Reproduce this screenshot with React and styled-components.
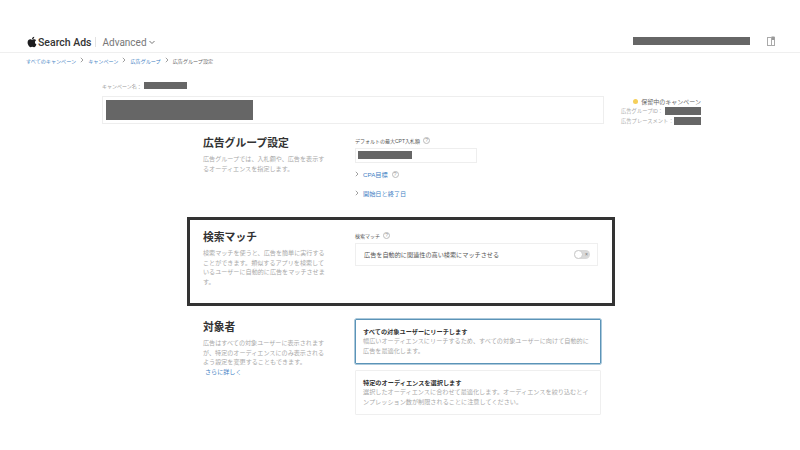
import styled, { createGlobalStyle } from "styled-components";
import { FaApple } from "react-icons/fa";

const GlobalStyle = createGlobalStyle`
  html, body {
    margin: 0;
    background: #fff;
    font-family: "Liberation Sans", "Noto Sans CJK JP", sans-serif;
    color: #333;
  }
`;

const Page = styled.div`
  width: 800px;
  height: 450px;
  overflow: hidden;
  background: #fff;
`;

const Header = styled.header`
  height: 53px;
  box-sizing: border-box;
  padding: 31px 25px 0 26px;
  border-bottom: 1px solid #efefef;
  display: flex;
  align-items: flex-start;
`;

const Brand = styled.div`
  display: flex;
  align-items: center;
  height: 20px;
  margin-top: 1px;
  color: #1d1d1f;
  font-family: Roboto, "Liberation Sans", sans-serif;
`;

const BrandName = styled.span`
  font-size: 10.5px;
  font-weight: 500;
  color: #333;
`;

const BrandDivider = styled.span`
  width: 1px;
  height: 10px;
  background: #e2e2e2;
  margin: 0 6px 0 4px;
`;

const Advanced = styled.span`
  font-size: 10px;
  color: #777;
  margin-right: 2px;
`;

const Redacted = styled.div`
  background: #666;
  width: ${(p) => p.$w}px;
  height: ${(p) => p.$h}px;
  flex: none;
`;

const HeaderRight = styled.div`
  margin-left: auto;
  display: flex;
  align-items: center;
  gap: 17px;
  height: 20px;
`;

const Crumbs = styled.nav`
  display: flex;
  align-items: center;
  gap: 4px;
  padding: 1px 0 0 26px;
  height: 12px;
  margin-bottom: 1px;
  font-size: 5.1px;
  color: #3f7fc4;
`;

const CrumbCurrent = styled.span`
  color: #666;
`;

const CampaignRow = styled.div`
  display: flex;
  padding: 14px 0 0 102px;
`;

const CampaignMain = styled.div`
  width: 502px;
`;

const CampaignLabel = styled.div`
  display: flex;
  align-items: center;
  gap: 2px;
  height: 8px;
  font-size: 5px;
  color: #999;
  margin-bottom: 7px;
`;

const CampaignBox = styled.div`
  box-sizing: border-box;
  height: 28px;
  border: 1px solid #eee;
  padding: 3px;
`;

const StatusPanel = styled.aside`
  margin: 16px 0 0 17px;
  width: 80px;
  display: flex;
  flex-direction: column;
  font-size: 5.3px;
  color: #aaa;
`;

const StatusTitle = styled.div`
  display: flex;
  align-items: center;
  justify-content: flex-end;
  gap: 3px;
  height: 9px;
  font-size: 6px;
  color: #666;
`;

const StatusDot = styled.span`
  width: 5px;
  height: 5px;
  border-radius: 50%;
  background: #f5cf5a;
`;

const StatusLine = styled.div`
  display: flex;
  align-items: center;
  justify-content: space-between;
  height: 10px;
  white-space: nowrap;
`;

const Sections = styled.main`
  width: 428px;
  margin-left: 187px;
  margin-top: 7px;
`;

const Section = styled.section`
  box-sizing: border-box;
  height: ${(p) => p.$h}px;
  padding: ${(p) => p.$pt}px 14px 0 16px;
  display: grid;
  grid-template-columns: 152px 1fr;
  align-items: start;
  ${(p) =>
    p.$boxed &&
    `
    border: 3px solid #333;
    padding-left: 13px;
    padding-right: 14px;
  `}
`;

const Column = styled.div`
  padding-top: ${(p) => p.$pt || 0}px;
`;

const Title = styled.h2`
  margin: 0 0 2px;
  font-size: 10.8px;
  line-height: 17px;
  font-weight: 700;
  color: #333;
`;

const Desc = styled.p`
  margin: 0;
  width: 123px;
  font-size: 6.1px;
  line-height: 9.6px;
  color: #aaa;
`;

const BlueLink = styled.a`
  display: block;
  margin-left: 2px;
  color: #3f7fc4;
`;

const FieldLabel = styled.div`
  display: flex;
  align-items: center;
  gap: 3px;
  height: 8px;
  font-size: 5px;
  color: #555;
  margin-bottom: 4px;
`;

const Help = styled.span`
  box-sizing: border-box;
  width: 7px;
  height: 7px;
  border: 1px solid #bbb;
  border-radius: 50%;
  font-size: 5px;
  line-height: 5px;
  text-align: center;
  color: #999;
`;

const BidInput = styled.div`
  box-sizing: border-box;
  width: 122px;
  height: 15px;
  border: 1px solid #eee;
  padding: 2px 2px;
  margin-bottom: 6px;
`;

const Expander = styled.div`
  display: flex;
  align-items: center;
  gap: 4px;
  height: 10px;
  margin-bottom: 9px;
  font-size: 6.2px;
  color: #3f7fc4;
`;

const ToggleBox = styled.div`
  box-sizing: border-box;
  height: 23px;
  border: 1px solid #efefef;
  padding: 0 7px 0 8px;
  display: flex;
  align-items: center;
  justify-content: space-between;
  font-size: 6.15px;
  color: #555;
`;

const Toggle = styled.span`
  position: relative;
  box-sizing: border-box;
  width: 16px;
  height: 9px;
  border-radius: 5px;
  background: #d9d9d9;
`;

const Knob = styled.span`
  position: absolute;
  left: 0;
  top: 0;
  width: 9px;
  height: 9px;
  box-sizing: border-box;
  border-radius: 50%;
  background: #fff;
  border: 1px solid #ccc;
`;

const ToggleOff = styled.span`
  position: absolute;
  right: 2px;
  top: 1px;
  font-size: 5px;
  line-height: 7px;
  color: #777;
`;

const Cards = styled.div`
  display: flex;
  flex-direction: column;
  gap: 6px;
`;

const Card = styled.div`
  box-sizing: border-box;
  height: 45px;
  padding: 8px 3px 0 7px;
  border: ${(p) => (p.$selected ? "1px solid #5b94b8" : "1px solid #efefef")};
  box-shadow: ${(p) => (p.$selected ? "0 0 0 0.5px #5b94b8" : "none")};
  border-radius: 1px;
`;

const CardTitle = styled.div`
  font-size: 6.2px;
  line-height: 8px;
  font-weight: 700;
  color: #333;
`;

const CardText = styled.div`
  font-size: 6.15px;
  line-height: 10px;
  color: #aaa;
`;

const PanelIcon = () => (
  <svg width="8" height="10" viewBox="0 0 8 10" fill="none" stroke="#aaa" strokeWidth="1">
    <rect x="0.5" y="1.5" width="7" height="8" />
    <rect x="4.500" y="0.5" width="3" height="3.500" fill="#999" stroke="none" />
    <path d="M4.500 1v8" />
  </svg>
);

const ChevronRight = () => (
  <svg width="4" height="6" viewBox="0 0 4 6" fill="none" stroke="#888" strokeWidth="0.8">
    <path d="M0.800 0.800L3 3L0.800 5.200" />
  </svg>
);

const App = () => {
  return (
    <Page>
      <GlobalStyle />
      <Header>
        <Brand>
          <FaApple size={12} />
          <BrandName>Search Ads</BrandName>
          <BrandDivider />
          <Advanced>Advanced</Advanced>
          <svg width="6" height="5" viewBox="0 0 6 5" fill="none" stroke="#777" strokeWidth="1">
            <path d="M0.5 1l2.5 2.500L5.500 1" />
          </svg>
        </Brand>
        <HeaderRight>
          <Redacted $w={117} $h={8} />
          <PanelIcon />
        </HeaderRight>
      </Header>

      <Crumbs>
        <span>すべてのキャンペーン</span>
        <ChevronRight />
        <span>キャンペーン</span>
        <ChevronRight />
        <span>広告グループ</span>
        <ChevronRight />
        <CrumbCurrent>広告グループ設定</CrumbCurrent>
      </Crumbs>

      <CampaignRow>
        <CampaignMain>
          <CampaignLabel>
            キャンペーン名：
            <Redacted $w={43} $h={7} />
          </CampaignLabel>
          <CampaignBox>
            <Redacted $w={147} $h={20} />
          </CampaignBox>
        </CampaignMain>
        <StatusPanel>
          <StatusTitle>
            <StatusDot />
            保留中のキャンペーン
          </StatusTitle>
          <StatusLine>
            広告グループID：
            <Redacted $w={36} $h={8} />
          </StatusLine>
          <StatusLine>
            広告プレースメント：
            <Redacted $w={27} $h={8} />
          </StatusLine>
        </StatusPanel>
      </CampaignRow>

      <Sections>
        <Section $h={84} $pt={2}>
          <Column>
            <Title>広告グループ設定</Title>
            <Desc>広告グループでは、入札額や、広告を表示するオーディエンスを指定します。</Desc>
          </Column>
          <Column $pt={1}>
            <FieldLabel>
              デフォルトの最大CPT入札額
              <Help>?</Help>
            </FieldLabel>
            <BidInput>
              <Redacted $w={54} $h={8} />
            </BidInput>
            <Expander>
              <ChevronRight />
              CPA目標
              <Help>?</Help>
            </Expander>
            <Expander>
              <ChevronRight />
              開始日と終了日
            </Expander>
          </Column>
        </Section>

        <Section $boxed $h={89} $pt={9}>
          <Column>
            <Title>検索マッチ</Title>
            <Desc>
              検索マッチを使うと、広告を簡単に実行することができます。類似するアプリを検索しているユーザーに自動的に広告をマッチさせます。
            </Desc>
          </Column>
          <Column $pt={2}>
            <FieldLabel>
              検索マッチ
              <Help>?</Help>
            </FieldLabel>
            <ToggleBox>
              広告を自動的に関連性の高い検索にマッチさせる
              <Toggle>
                <Knob />
                <ToggleOff>×</ToggleOff>
              </Toggle>
            </ToggleBox>
          </Column>
        </Section>

        <Section $h={110} $pt={13}>
          <Column>
            <Title>対象者</Title>
            <Desc>
              広告はすべての対象ユーザーに表示されますが、特定のオーディエンスにのみ表示されるよう設定を変更することもできます。
              <BlueLink>さらに詳しく</BlueLink>
            </Desc>
          </Column>
          <Cards>
            <Card $selected>
              <CardTitle>すべての対象ユーザーにリーチします</CardTitle>
              <CardText>
                幅広いオーディエンスにリーチするため、すべての対象ユーザーに向けて自動的に
                <br />
                広告を最適化します。
              </CardText>
            </Card>
            <Card>
              <CardTitle>特定のオーディエンスを選択します</CardTitle>
              <CardText>
                選択したオーディエンスに合わせて最適化します。オーディエンスを絞り込むとイ
                <br />
                ンプレッション数が制限されることに注意してください。
              </CardText>
            </Card>
          </Cards>
        </Section>
      </Sections>
    </Page>
  );
};

export default App;
